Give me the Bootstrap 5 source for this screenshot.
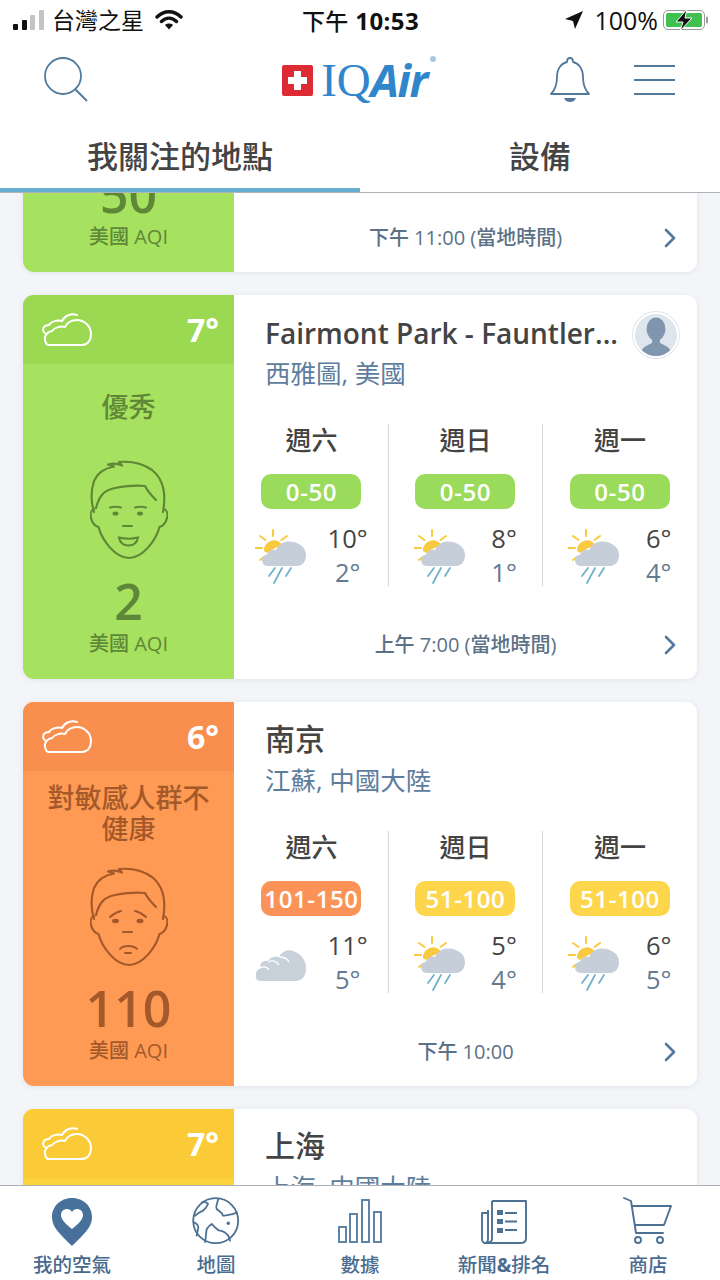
<!DOCTYPE html>
<html lang="zh-Hant">
<head>
<meta charset="utf-8">
<title>IQAir</title>
<link href="https://cdn.jsdelivr.net/npm/bootstrap@5.3.0/dist/css/bootstrap.min.css" rel="stylesheet">
<style>
html,body{height:100%;margin:0;overflow:hidden}
body{font-family:"Open Sans","Noto Sans CJK TC",sans-serif;background:#f3f5f8;color:#444}
.app-shell{width:720px;height:1280px}
.top-area{background:#fff;border-bottom:1px solid #aeb4b9;flex:none}
.status-row{height:40px;padding:0 12px 0 13px;color:#111}
.status-side{flex:1 1 0}
.carrier{font-size:23px;line-height:40px;margin-left:8px;margin-right:11px;font-weight:400}
.clock{font-size:24px;font-weight:700;line-height:40px;letter-spacing:.4px}
.clock span{font-family:"Noto Sans CJK TC",sans-serif;font-weight:500;font-size:23px}
.batt-text{font-size:25px;line-height:40px;margin:0 5px 0 11px}
.head-row{height:80px;padding:0 45px 0 43px}
.head-side{flex:1 1 0}
.logo-iq{font-family:"Liberation Serif",serif;font-size:47px;color:#2f86cb;line-height:48px;margin-left:8px}
.logo-air{font-family:"Open Sans",sans-serif;font-weight:700;font-style:italic;font-size:45px;color:#2f86cb;line-height:48px;letter-spacing:-1.5px}
.logo-reg{width:6px;height:6px;background:#a9c8e0;border-radius:50%;margin:0 0 0 3px;align-self:flex-start}
.head-right{gap:44px}
.tab-cell{height:72px;padding-top:15px;font-size:31px;font-weight:500;line-height:40px;text-align:center;color:#444;border-bottom:4px solid transparent;font-family:"Noto Sans CJK TC",sans-serif}
.tab-on{border-bottom-color:#69add0}
.scroll-area{flex:1 1 0;min-height:0;overflow:hidden;background:#f3f5f8}
.scroll-inner{margin-top:-305px;padding:0 23px;gap:23px}
.aq-card{height:384px;border-radius:11px;box-shadow:0 1px 5px rgba(90,110,130,.12);flex:none;border:0}
.side-pane{width:211px;flex:none;text-align:center}
.side-head{height:69px;padding:0 15px 0 18px}
.side-temp{font-size:32px;font-weight:700;color:#fff;line-height:69px}
.aq-good{background:#a6e15f;color:#5f8738}
.aq-good .side-head{background:#9bd953}
.aq-bad{background:#ff9a54;color:#a4592a}
.aq-bad .side-head{background:#f98f4e}
.aq-mid{background:#fdd33d;color:#a4852a}
.aq-mid .side-head{background:#fbcb37}
.side-label{height:82px;font-size:27px;line-height:31px;font-weight:500;padding:0 20px;font-family:"Noto Sans CJK TC",sans-serif}
.side-num{font-size:50px;font-weight:600;line-height:52px;padding-bottom:4px;margin-top:auto}
.side-unit{font-size:20px;line-height:26px;padding-bottom:22px;font-weight:500}
.face-svg{width:78px;height:100px;margin:14px auto 0;display:block}
.main-pane{min-width:0;background:#fff}
.place-title{height:58px;padding:18px 16px 0 31px}
.place-name{font-size:28px;font-weight:600;line-height:40px;color:#444;white-space:nowrap}
.place-cjk{font-size:30px;font-weight:500;font-family:"Noto Sans CJK TC",sans-serif;margin-top:-3px}
.place-sub{font-size:25.500px;line-height:40px;color:#5e7d9c;padding-left:31px;white-space:nowrap}
.avatar-dot{position:absolute;left:399px;top:17px;width:46px;height:46px;border-radius:50%;background:#dfe5ec;border:2px solid #fff;box-shadow:0 0 0 1px #e1e6eb;overflow:hidden}
.day-row{margin:31px 0 0 1px;height:162px}
.day-cell{height:162px;border-right:1px solid #d4d8dc}
.day-cell:last-child{border-right:0}
.day-name{font-size:26px;line-height:36px;text-align:center;color:#444;font-weight:500;font-family:"Noto Sans CJK TC",sans-serif;margin-top:-3px}
.aqi-pill{width:100px;height:35px;border-radius:10px;margin:17px auto 0;text-align:center;color:#fff;font-size:24px;line-height:35px;font-weight:600;letter-spacing:.6px}
.pill-g{background:#9bdb5c}
.pill-o{background:#fb9358}
.pill-y{background:#fdd64c}
.day-lower{padding-top:20px}
.wx-svg{width:52px;height:56px;flex:none}
.temp-col{text-align:center;font-size:25.500px;line-height:34px;font-weight:500;margin-top:-8px}
.temp-hi{color:#444}
.temp-lo{color:#637a90}
.foot-row{margin-top:auto;height:68px;position:relative}
.foot-time{font-size:20px;color:#5c7186;font-weight:500;line-height:30px;text-align:center;width:100%}
.foot-chev{position:absolute;right:20px;top:23px;width:14px;height:22px}
.nav-bottom{height:95px;background:#fff;border-top:1px solid #a9afb5;flex:none}
.nav-cell{text-align:center;padding-top:11px}
.nav-svg{display:block;margin:0 auto;width:50px;height:50px}
.nav-text{font-size:19.500px;line-height:26px;color:#4a6c90;margin-top:4px;font-weight:500;font-family:"Noto Sans CJK TC",sans-serif}
.nav-text-on{color:#47698c}
.nav-latin{font-family:"Open Sans",sans-serif;font-weight:700}
</style>
</head>
<body>
<svg width="0" height="0" class="position-absolute">
<defs>
<symbol id="s-cloud" viewBox="0 0 52 36">
<path d="M8 33H41C47 33 50 28 50 22C50 14 43 8 36 8C30 8 26 11 24 15C20 14 14 15 11 19C6 20 3 24 4 28C4.500 31 6 33 8 33Z" fill="none" stroke="currentColor" stroke-width="2" stroke-linejoin="round"/>
<path d="M5 22C0 19 2 13 8 13C10 9 17 8 21 9C24 3 31 1 36 3" fill="none" stroke="currentColor" stroke-width="2" stroke-linecap="round"/>
</symbol>
<symbol id="s-rainsun" viewBox="0 0 52 56">
<path d="M18 1V7M5 7L10.500 11M32 7L26.500 11M0 19H7M5 31L9 28" stroke="#f9ca3f" stroke-width="2" stroke-linecap="round" fill="none"/>
<path d="M9 22A10 10 0 0 1 28 17L20 19L12 24Z" fill="#f9ca3f"/>
<path d="M13 37C9 37 7 34 7 31C7 28 9 26 12 25.500C14 21 18 19.500 21 21C24 15 29 12 34 12.500C42 12.500 51 17 51 26C51 33 47 37 42 37Z" fill="#c6ced9"/>
<path d="M14 47L20 39M19 54L27 39M31 47L36 39" stroke="#6fb2c9" stroke-width="1.800" stroke-linecap="round" fill="none"/>
</symbol>
<symbol id="s-graycloud" viewBox="0 0 52 56">
<path d="M6 45C1 45 0 41 1 38C1 34 4 33 6 32C4 28 8 24 13 25C15 21 20 20 24 21C27 15 33 13 38 15C45 17 51 23 51 32C51 40 47 45 41 45Z" fill="#c8d1da"/>
<path d="M5 32C9 30 12 31 14 34M13 26C17 24 21 25 24 29M24 21C28 21 32 22 34 26" stroke="#fff" stroke-width="1.300" fill="none"/>
</symbol>
<symbol id="s-chev" viewBox="0 0 14 22">
<path d="M3 3L11 11L3 19" fill="none" stroke="#55799d" stroke-width="2.600" stroke-linecap="round" stroke-linejoin="round"/>
</symbol>
<symbol id="s-facebase" viewBox="0 0 78 100">
<g fill="none" stroke="currentColor" stroke-width="2.200" stroke-linecap="round" stroke-linejoin="round">
<path d="M4 49C1 50 0 54 1 58C2 62 5 66 8.500 67C12 80 25 98 39 98C53 98 66 80 69.500 67C73 66 76 62 77 58C78 54 77 50 74 49"/>
<path d="M4 52C1 42 1 30 4 21C8 12 15 8 24 6.500C22 5.500 20 5 18 4.500C23 3 28 3.500 32 5.500C31 4 30 3.500 29 2C40 1 52 3 62 10C72 18 77 30 73 52"/>
<path d="M6 48C9 36 14 30 25 28C36 26 47 25 55 26C57 30 62 36 66 40"/>
</g>
</symbol>
<symbol id="s-face-happy" viewBox="0 0 78 100">
<use href="#s-facebase"/>
<g fill="none" stroke="currentColor" stroke-width="2" stroke-linecap="round">
<path d="M20 47.500C24 46.500 27 46.500 31 47.500M45 47.500C49 46.500 52 46.500 56 47.500M33 66H42"/>
<path d="M29 77.500C35 79 42 79 48 77.500C47 83 43 85.500 38.500 85.500C34 85.500 30 83 29 77.500Z"/>
</g>
<ellipse cx="25.500" cy="53.500" rx="3" ry="2" fill="currentColor"/><ellipse cx="50" cy="53.500" rx="3" ry="2" fill="currentColor"/>
</symbol>
<symbol id="s-face-sad" viewBox="0 0 78 100">
<use href="#s-facebase"/>
<g fill="none" stroke="currentColor" stroke-width="2" stroke-linecap="round">
<path d="M20 50C23 47 27 45 31 44M45 44C49 45 53 47 56 50M33 65H42"/>
<path d="M30 82C33 78 43 78 47 82M35 86H41"/>
</g>
<ellipse cx="25.500" cy="54" rx="3.500" ry="2.200" fill="currentColor"/><ellipse cx="50" cy="54" rx="3.500" ry="2.200" fill="currentColor"/>
</symbol>
</defs>
</svg>

<div class="app-shell d-flex flex-column">
  <header class="top-area">
    <div class="status-row d-flex align-items-center">
      <div class="status-side d-flex align-items-center">
        <svg width="31" height="22" viewBox="0 0 31 22"><rect x="0" y="15" width="5" height="6" rx="1" fill="#111"/><rect x="9" y="11" width="5" height="10" rx="1" fill="#111"/><rect x="17" y="6" width="5" height="15" rx="1" fill="#c4c4c4"/><rect x="26" y="1" width="5" height="20" rx="1" fill="#c4c4c4"/></svg>
        <span class="carrier">台灣之星</span>
        <svg width="28" height="20" viewBox="0 0 28 20"><path d="M2 7C9 0 19 0 26 7M6.500 11.500C11 7 17 7 21.500 11.500" fill="none" stroke="#111" stroke-width="3.400" stroke-linecap="round"/><path d="M10 15C12 13 16 13 18 15L14 19.500Z" fill="#111"/></svg>
      </div>
      <div class="clock"><span>下午</span> 10:53</div>
      <div class="status-side d-flex align-items-center justify-content-end">
        <svg width="18" height="18" viewBox="0 0 18 18"><path d="M18 0L0 8L8 10L10 18Z" fill="#111"/></svg>
        <span class="batt-text">100%</span>
        <svg width="45" height="22" viewBox="0 0 45 22"><rect x="0.500" y="1.500" width="41" height="19" rx="4.500" fill="#fff" stroke="#9a9a9a"/><rect x="3" y="4" width="36" height="14" rx="2" fill="#3fc04f"/><rect x="43" y="7.500" width="2" height="7" rx="1" fill="#9a9a9a"/><path d="M24 0L13 13H20L17 22L29 9H22Z" fill="#111" stroke="#fff" stroke-width="1"/></svg>
      </div>
    </div>
    <div class="head-row d-flex align-items-center">
      <div class="head-side d-flex align-items-center">
        <svg width="46" height="46" viewBox="0 0 46 46"><circle cx="20" cy="19" r="18" fill="none" stroke="#527a9c" stroke-width="1.800"/><path d="M32 32L44 44" stroke="#527a9c" stroke-width="2"/></svg>
      </div>
      <div class="d-flex align-items-center">
        <svg width="31" height="31" viewBox="0 0 31 31"><rect width="31" height="31" rx="2" fill="#dd2a34"/><path d="M12 6H19V12H25V19H19V25H12V19H6V12H12Z" fill="#fff"/></svg>
        <span class="logo-iq">IQ</span><span class="logo-air">Air</span><span class="logo-reg"></span>
      </div>
      <div class="head-side head-right d-flex align-items-center justify-content-end">
        <svg width="40" height="46" viewBox="0 0 40 46"><path d="M1 37C5 33 7 28 7 20C7 11 12 6 17 5C17 2 18 1 20 1C22 1 23 2 23 5C28 6 33 11 33 20C33 28 35 33 39 37Z" fill="none" stroke="#52789b" stroke-width="1.800" stroke-linejoin="round"/><path d="M14 41H26C25 44 22 45 20 45C18 45 15 44 14 41Z" fill="#52789b"/></svg>
        <svg width="41" height="30" viewBox="0 0 41 30"><path d="M0 1H41M0 15H41M0 29H41" stroke="#52789b" stroke-width="1.800"/></svg>
      </div>
    </div>
    <div class="row g-0">
      <div class="col-6 tab-cell tab-on">我關注的地點</div>
      <div class="col-6 tab-cell">設備</div>
    </div>
  </header>

  <main class="scroll-area">
    <div class="scroll-inner d-flex flex-column">

      <section class="card aq-card flex-row overflow-hidden">
        <div class="side-pane aq-good d-flex flex-column">
          <div class="side-num">50</div>
          <div class="side-unit">美國 AQI</div>
        </div>
        <div class="main-pane flex-grow-1 d-flex flex-column">
          <div class="foot-row d-flex align-items-center">
            <div class="foot-time">下午 11:00 (當地時間)</div>
            <svg class="foot-chev"><use href="#s-chev"/></svg>
          </div>
        </div>
      </section>

      <section class="card aq-card flex-row overflow-hidden">
        <div class="side-pane aq-good d-flex flex-column">
          <div class="side-head d-flex align-items-center justify-content-between">
            <svg class="text-white" width="52" height="36"><use href="#s-cloud"/></svg>
            <span class="side-temp">7°</span>
          </div>
          <div class="side-label d-flex align-items-center justify-content-center">優秀</div>
          <svg class="face-svg"><use href="#s-face-happy"/></svg>
          <div class="side-num">2</div>
          <div class="side-unit">美國 AQI</div>
        </div>
        <div class="main-pane flex-grow-1 d-flex flex-column position-relative">
          <div class="place-title"><div class="place-name">Fairmont Park - Fauntler...</div></div>
          <div class="avatar-dot"><svg width="42" height="42" viewBox="0 0 42 42"><ellipse cx="21" cy="15" rx="9.500" ry="11.500" fill="#7f96ae"/><path d="M5 42C5 34 11 32 17 29V24H25V29C31 32 37 34 37 42Z" fill="#7f96ae"/></svg></div>
          <div class="place-sub">西雅圖, 美國</div>
          <div class="row g-0 day-row">
            <div class="col-4 day-cell"><div class="day-name">週六</div><div class="aqi-pill pill-g">0-50</div>
              <div class="day-lower d-flex justify-content-evenly"><svg class="wx-svg"><use href="#s-rainsun"/></svg><div class="temp-col"><div class="temp-hi">10°</div><div class="temp-lo">2°</div></div></div></div>
            <div class="col-4 day-cell"><div class="day-name">週日</div><div class="aqi-pill pill-g">0-50</div>
              <div class="day-lower d-flex justify-content-evenly"><svg class="wx-svg"><use href="#s-rainsun"/></svg><div class="temp-col"><div class="temp-hi">8°</div><div class="temp-lo">1°</div></div></div></div>
            <div class="col-4 day-cell"><div class="day-name">週一</div><div class="aqi-pill pill-g">0-50</div>
              <div class="day-lower d-flex justify-content-evenly"><svg class="wx-svg"><use href="#s-rainsun"/></svg><div class="temp-col"><div class="temp-hi">6°</div><div class="temp-lo">4°</div></div></div></div>
          </div>
          <div class="foot-row d-flex align-items-center">
            <div class="foot-time">上午 7:00 (當地時間)</div>
            <svg class="foot-chev"><use href="#s-chev"/></svg>
          </div>
        </div>
      </section>

      <section class="card aq-card flex-row overflow-hidden">
        <div class="side-pane aq-bad d-flex flex-column">
          <div class="side-head d-flex align-items-center justify-content-between">
            <svg class="text-white" width="52" height="36"><use href="#s-cloud"/></svg>
            <span class="side-temp">6°</span>
          </div>
          <div class="side-label d-flex align-items-center justify-content-center">對敏感人群不健康</div>
          <svg class="face-svg"><use href="#s-face-sad"/></svg>
          <div class="side-num">110</div>
          <div class="side-unit">美國 AQI</div>
        </div>
        <div class="main-pane flex-grow-1 d-flex flex-column">
          <div class="place-title"><div class="place-name place-cjk">南京</div></div>
          <div class="place-sub">江蘇, 中國大陸</div>
          <div class="row g-0 day-row">
            <div class="col-4 day-cell"><div class="day-name">週六</div><div class="aqi-pill pill-o">101-150</div>
              <div class="day-lower d-flex justify-content-evenly"><svg class="wx-svg"><use href="#s-graycloud"/></svg><div class="temp-col"><div class="temp-hi">11°</div><div class="temp-lo">5°</div></div></div></div>
            <div class="col-4 day-cell"><div class="day-name">週日</div><div class="aqi-pill pill-y">51-100</div>
              <div class="day-lower d-flex justify-content-evenly"><svg class="wx-svg"><use href="#s-rainsun"/></svg><div class="temp-col"><div class="temp-hi">5°</div><div class="temp-lo">4°</div></div></div></div>
            <div class="col-4 day-cell"><div class="day-name">週一</div><div class="aqi-pill pill-y">51-100</div>
              <div class="day-lower d-flex justify-content-evenly"><svg class="wx-svg"><use href="#s-rainsun"/></svg><div class="temp-col"><div class="temp-hi">6°</div><div class="temp-lo">5°</div></div></div></div>
          </div>
          <div class="foot-row d-flex align-items-center">
            <div class="foot-time">下午 10:00</div>
            <svg class="foot-chev"><use href="#s-chev"/></svg>
          </div>
        </div>
      </section>

      <section class="card aq-card flex-row overflow-hidden">
        <div class="side-pane aq-mid d-flex flex-column">
          <div class="side-head d-flex align-items-center justify-content-between">
            <svg class="text-white" width="52" height="36"><use href="#s-cloud"/></svg>
            <span class="side-temp">7°</span>
          </div>
        </div>
        <div class="main-pane flex-grow-1 d-flex flex-column">
          <div class="place-title"><div class="place-name place-cjk">上海</div></div>
          <div class="place-sub">上海, 中國大陸</div>
        </div>
      </section>
    </div>
  </main>

  <nav class="nav-bottom row g-0">
    <div class="col nav-cell">
      <svg class="nav-svg" viewBox="0 0 50 50"><path d="M25 1C13 1 5 10 5 20C5 30 12 36 25 49C38 36 45 30 45 20C45 10 37 1 25 1Z" fill="#47709a"/><path d="M25 32C19 27 14 23 14 18C14 14 17 12 20 12C22 12 24 13 25 15C26 13 28 12 30 12C33 12 36 14 36 18C36 23 31 27 25 32Z" fill="#fff"/></svg>
      <div class="nav-text nav-text-on">我的空氣</div>
    </div>
    <div class="col nav-cell">
      <svg class="nav-svg" viewBox="0 0 50 50"><g fill="none" stroke="#4d7193" stroke-width="1.800" stroke-linejoin="round" stroke-linecap="round"><circle cx="24.700" cy="23.700" r="22.500"/><path d="M10.700 5.300C13 5 16 5 17 7C16 10 14 12 12 13.700C9 15 6 17 4 18.700"/><path d="M27 2C27 6 24 9 25.700 12C28 14 31 15 32 18.700C36 18 42 18 45.700 15.300"/><path d="M3 25.300C5 26 7 28 7.300 30.300C7 33 6 36 5.700 38.700"/><path d="M14 45C15 41 15 36 15.700 32C17 30 19 28 20.700 27C23 29 26 33 29 33.700C32 34 35 36 37.300 38.700C38 40 39 42 39 43.700"/></g><circle cx="37.300" cy="26.300" r="1.700" fill="#4d7193"/></svg>
      <div class="nav-text">地圖</div>
    </div>
    <div class="col nav-cell">
      <svg class="nav-svg" viewBox="0 0 50 50"><g fill="none" stroke="#5a7ea2" stroke-width="1.900"><rect x="4" y="30" width="7" height="15"/><rect x="15" y="17" width="7" height="28"/><rect x="27" y="3" width="7" height="42"/><rect x="39" y="15" width="7" height="30"/></g></svg>
      <div class="nav-text">數據</div>
    </div>
    <div class="col nav-cell">
      <svg class="nav-svg" viewBox="0 0 50 50"><g fill="none" stroke="#4d7193" stroke-width="1.900" stroke-linejoin="round"><path d="M13 4H47V41C47 44 45 46 42 46H6C4 46 3 44 3 42V16H9"/><path d="M9 13V42C9 44 8 46 6 46C11 46 13 44 13 42V4"/><path d="M26 16H38M26 24.500H38M26 33H38"/></g><rect x="18" y="13" width="6" height="5" fill="#4d7193"/><rect x="18" y="22" width="6" height="5" fill="#4d7193"/><rect x="18" y="31" width="6" height="5" fill="#4d7193"/></svg>
      <div class="nav-text">新聞<span class="nav-latin">&amp;</span>排名</div>
    </div>
    <div class="col nav-cell">
      <svg class="nav-svg" viewBox="0 0 50 50"><g fill="none" stroke="#4d7193" stroke-width="1.900" stroke-linecap="round" stroke-linejoin="round"><path d="M1 1L8 4L13 36H40"/><path d="M9 9H48L41 28H12"/><circle cx="15" cy="43" r="3"/><circle cx="37" cy="43" r="3"/></g></svg>
      <div class="nav-text">商店</div>
    </div>
  </nav>
</div>
<script src="https://cdn.jsdelivr.net/npm/bootstrap@5.3.0/dist/js/bootstrap.bundle.min.js"></script>
</body>
</html>
